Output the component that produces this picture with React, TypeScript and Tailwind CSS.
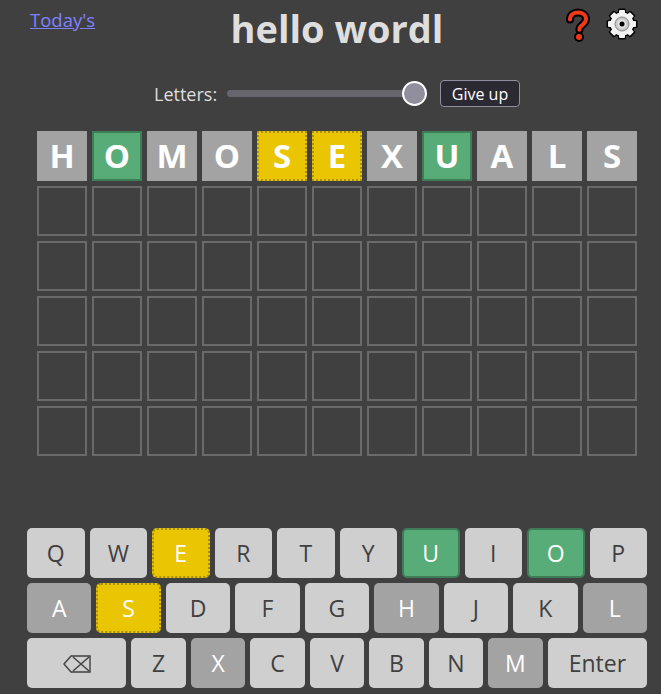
import React from 'react';

const GREEN = new Set(['U', 'O']);
const YELLOW = new Set(['E', 'S']);
const GRAY = new Set(['H', 'M', 'X', 'A', 'L']);

const guess = 'HOMOSEXUALS'.split('');
const rows = [
  ['Q', 'W', 'E', 'R', 'T', 'Y', 'U', 'I', 'O', 'P'],
  ['A', 'S', 'D', 'F', 'G', 'H', 'J', 'K', 'L'],
  ['Backspace', 'Z', 'X', 'C', 'V', 'B', 'N', 'M', 'Enter'],
];

const tileClass = (letter: string, index: number) => {
  if (index === 1 || index === 7) return 'bg-[#57ac78] border-2 border-[#3f7d59]';
  if (index === 4 || index === 5) return 'bg-[#e9c601] border-2 border-dotted border-[#a88f0c]';
  return letter ? 'bg-[#a3a3a3]' : '';
};

const keyClass = (key: string) => {
  if (GREEN.has(key)) return 'bg-[#57ac78] border-[#3f7d59] text-white';
  if (YELLOW.has(key)) return 'bg-[#e9c601] border-dotted border-[#a88f0c] text-white';
  if (GRAY.has(key)) return 'bg-[#a3a3a3] border-transparent text-white';
  return 'bg-[#cfcfcf] border-transparent text-[#404040]';
};

const QuestionIcon = () => (
  <svg width="26" height="36" viewBox="0 0 26 36" fill="none">
    <path
      d="M5 11.5C5 7 8.5 4.5 13 4.5s8 2.6 8 6.6c0 3-1.8 4.6-4 6.2-1.8 1.3-2.6 2.2-2.6 4.4"
      stroke="#000"
      strokeWidth="8"
      strokeLinecap="round"
    />
    <circle cx="14" cy="29" r="5" fill="#000" />
    <path
      d="M5 11.5C5 7 8.5 4.5 13 4.5s8 2.6 8 6.6c0 3-1.8 4.6-4 6.2-1.8 1.3-2.6 2.2-2.6 4.4"
      stroke="#f03a17"
      strokeWidth="4"
      strokeLinecap="round"
    />
    <circle cx="14" cy="29" r="3" fill="#f03a17" />
  </svg>
);

const GearIcon = () => {
  const teeth = [0, 45, 90, 135, 180, 225, 270, 315];
  return (
    <svg width="32" height="32" viewBox="0 0 32 32">
      <g fill="#000">
        <circle cx="16" cy="16" r="13" />
        {teeth.map((a) => (
          <rect key={a} x="12" y="0.5" width="8" height="8" rx="1.5" transform={`rotate(${a} 16 16)`} />
        ))}
      </g>
      <g fill="#f2f2f2">
        <circle cx="16" cy="16" r="11.5" />
        {teeth.map((a) => (
          <rect key={a} x="13" y="2" width="6" height="6" rx="1" transform={`rotate(${a} 16 16)`} />
        ))}
      </g>
      <circle cx="16" cy="16" r="7" fill="#c8c8c8" stroke="#8a8a8a" strokeWidth="1" />
      <circle cx="16" cy="16" r="4.5" fill="#e4e4e4" />
      <circle cx="16" cy="16" r="2.5" fill="#000" />
    </svg>
  );
};

const BackspaceIcon = () => (
  <svg width="28" height="18" viewBox="0 0 28 18" fill="none" stroke="#404040" strokeWidth="1.4">
    <path d="M8 1h19v16H8L1 9z" />
    <path d="M10 2l16 14M26 2L10 16" />
  </svg>
);

export default function App() {
  return (
    <div className="h-screen w-screen overflow-hidden bg-[#404040] font-['Open_Sans','Noto_Sans',sans-serif]">
      <div className="w-[674px]">
        {/* Header */}
        <header className="flex h-[56px] items-start justify-between px-[30px]">
          <a href="#" className="mt-[8px] w-[130px] text-[18.5px] leading-[24px] text-[#8080ff] underline">
            Today's
          </a>
          <h1 className="text-[38px] leading-[56px] font-bold text-[#dedede]">hello wordl</h1>
          <div className="mt-[8px] flex w-[130px] items-start justify-end gap-[15px] pr-[6px]">
            <QuestionIcon />
            <GearIcon />
          </div>
        </header>

        {/* Letters slider */}
        <div className="mt-[24px] flex h-[27px] items-center pl-[154px]">
          <label className="w-[73px] text-[18px] leading-[22px] text-[#dedede]">Letters:</label>
          <input
            type="range"
            min={4}
            max={11}
            defaultValue={11}
            className="h-[7px] w-[200px] appearance-none rounded-full bg-[#66666c] [&::-webkit-slider-thumb]:h-[25px] [&::-webkit-slider-thumb]:w-[25px] [&::-webkit-slider-thumb]:appearance-none [&::-webkit-slider-thumb]:rounded-full [&::-webkit-slider-thumb]:border-2 [&::-webkit-slider-thumb]:border-white [&::-webkit-slider-thumb]:bg-[#8f8f9d]"
          />
          <button className="ml-[13px] h-[27px] w-[80px] rounded-[4px] border border-[#8f8f9d] bg-[#2b2a33] text-[16px] leading-none text-white">
            Give up
          </button>
        </div>

        {/* Board */}
        <div className="mt-[24px] flex flex-col gap-[5px] px-[37px]">
          {[0, 1, 2, 3, 4, 5].map((r) => (
            <div key={r} className="flex gap-[5px]">
              {guess.map((letter, i) => (
                <div
                  key={i}
                  className={`flex h-[50px] w-[50px] items-center justify-center text-[33px] font-bold text-white ${
                    r === 0 ? tileClass(letter, i) : 'border-2 border-[#6a6a6a]'
                  }`}
                >
                  {r === 0 ? letter : ''}
                </div>
              ))}
            </div>
          ))}
        </div>

        {/* Keyboard */}
        <div className="mt-[72px] flex flex-col gap-[5px] px-[27px]">
          {rows.map((row, r) => (
            <div key={r} className="flex gap-[5px]">
              {row.map((key) => (
                <button
                  key={key}
                  className={`flex h-[50px] min-w-0 items-center justify-center rounded-[5px] border-2 pt-[1px] text-[23px] ${
                    key === 'Backspace' || key === 'Enter' ? 'flex-[1.89]' : 'flex-1'
                  } ${keyClass(key)}`}
                >
                  {key === 'Backspace' ? <BackspaceIcon /> : key}
                </button>
              ))}
            </div>
          ))}
        </div>
      </div>
    </div>
  );
}
